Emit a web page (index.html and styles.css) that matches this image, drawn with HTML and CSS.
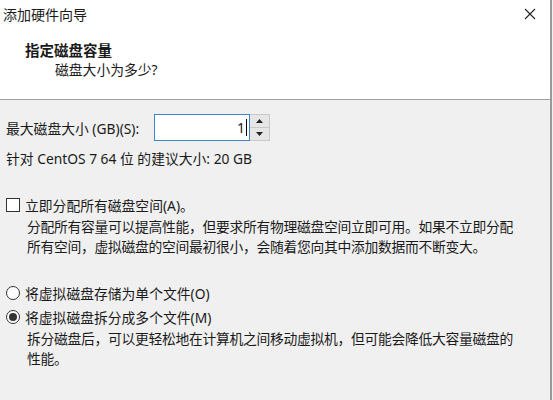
FILE: index.html
```html
<!DOCTYPE html>
<html lang="zh-CN">
<head>
    <meta charset="UTF-8">
    <title>添加硬件向导</title>
    <link rel="stylesheet" href="styles.css">
</head>
<body>
    <div class="window">
        <div class="header">
            <div class="titlebar">
                <span class="title">添加硬件向导</span>
                <span class="close">
                    <svg width="12" height="12" viewBox="0 0 12 12"><path d="M1 1 L11 11 M11 1 L1 11" stroke="#222" stroke-width="1.1" fill="none"/></svg>
                </span>
            </div>
            <div class="heading">指定磁盘容量</div>
            <div class="subheading">磁盘大小为多少?</div>
        </div>

        <div class="content">
            <div class="size-row">
                <label class="size-label">最大磁盘大小 (GB)(S):</label>
                <div class="spin">
                    <div class="spin-input"><span class="value">1</span><span class="caret"></span></div>
                    <div class="spin-buttons">
                        <div class="spin-btn"><svg width="7" height="4" viewBox="0 0 7 4"><path d="M0 4 L3.5 0 L7 4 Z" fill="#222"/></svg></div>
                        <div class="spin-btn"><svg width="7" height="4" viewBox="0 0 7 4"><path d="M0 0 L3.5 4 L7 0 Z" fill="#222"/></svg></div>
                    </div>
                </div>
            </div>
            <div class="hint">针对 CentOS 7 64 位 的建议大小: 20 GB</div>

            <div class="option check-option">
                <span class="checkbox"></span>
                <span>立即分配所有磁盘空间(A)。</span>
            </div>
            <p class="desc">分配所有容量可以提高性能，但要求所有物理磁盘空间立即可用。如果不立即分配<br>所有空间，虚拟磁盘的空间最初很小，会随着您向其中添加数据而不断变大。</p>

            <div class="option radio-first">
                <span class="radio"></span>
                <span>将虚拟磁盘存储为单个文件(O)</span>
            </div>
            <div class="option">
                <span class="radio checked"></span>
                <span>将虚拟磁盘拆分成多个文件(M)</span>
            </div>
            <p class="desc desc-last">拆分磁盘后，可以更轻松地在计算机之间移动虚拟机，但可能会降低大容量磁盘的<br>性能。</p>
        </div>
    </div>
</body>
</html>
```

FILE: styles.css
```css
body {
    margin: 0;
    font-family: "Noto Sans", "Noto Sans CJK SC", sans-serif;
    font-size: 13.8px;
    color: #1a1a1a;
    background-color: #f0f0f0;
    overflow: hidden;
}
.window {
    width: 550px;
    height: 400px;
    border-right: 2px solid #9a9a9a;
    background-color: #f0f0f0;
}
.header {
    height: 99px;
    background-color: #fff;
    border-bottom: 1px solid #a0a0a0;
}
.titlebar {
    height: 28px;
    display: flex;
    align-items: center;
    justify-content: space-between;
    padding-left: 3px;
    padding-right: 14px;
}
.title {
    font-size: 14px;
}
.close {
    display: flex;
}
.heading {
    margin-top: 12px;
    padding-left: 25px;
    line-height: 20px;
    font-weight: bold;
    font-size: 14.5px;
}
.subheading {
    padding-left: 55px;
    line-height: 20px;
}
.content {
    padding-left: 6px;
}
.size-row {
    display: flex;
    align-items: center;
    margin-top: 14px;
    height: 27px;
}
.size-label {
    width: 148px;
}
.spin {
    display: flex;
    height: 27px;
}
.spin-input {
    width: 92px;
    height: 25px;
    border: 1px solid #3b86c8;
    background-color: #fff;
    display: flex;
    align-items: center;
    justify-content: flex-end;
    padding-right: 2px;
}
.value {
    font-size: 14px;
}
.caret {
    width: 1px;
    height: 17px;
    background-color: #000;
    margin-left: 1px;
}
.spin-buttons {
    display: flex;
    flex-direction: column;
    width: 19px;
    border: 1px solid #c8c8c8;
    border-left: none;
    height: 25px;
}
.spin-btn {
    flex: 1;
    display: flex;
    align-items: center;
    justify-content: center;
    background-color: #e6e6e6;
}
.spin-btn + .spin-btn {
    border-top: 1px solid #c8c8c8;
}
.hint {
    margin-top: 8px;
    line-height: 20px;
}
.option {
    display: flex;
    align-items: center;
    height: 24px;
    gap: 5px;
}
.check-option {
    margin-top: 24px;
    height: 24px;
}
.checkbox {
    width: 12px;
    height: 12px;
    border: 1px solid #333;
    background-color: #fff;
}
.radio {
    width: 12px;
    height: 12px;
    border: 1px solid #333;
    border-radius: 50%;
    background-color: #fff;
    position: relative;
}
.radio.checked::after {
    content: "";
    position: absolute;
    left: 2px;
    top: 2px;
    width: 8px;
    height: 8px;
    border-radius: 50%;
    background-color: #333;
}
.desc {
    margin: 0;
    padding-left: 21px;
    line-height: 20px;
    white-space: nowrap;
    letter-spacing: -0.3px;
}
.radio-first {
    margin-top: 24px;
}
.desc-last {
    line-height: 19.5px;
}
```
